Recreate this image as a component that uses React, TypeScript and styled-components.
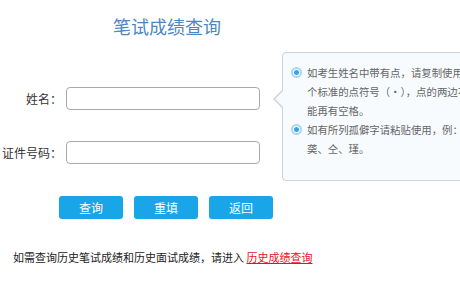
import React from 'react'
import styled, { createGlobalStyle } from 'styled-components'

const GlobalStyle = createGlobalStyle`
  html, body {
    margin: 0;
    padding: 0;
    background: #fff;
    overflow: hidden;
  }
  body {
    font-family: "Noto Sans CJK SC", "Noto Sans", sans-serif;
    color: #333;
  }
`

const Page = styled.div`
  width: 460px;
  height: 291px;
  overflow: hidden;
`

const Main = styled.div`
  display: flex;
  align-items: flex-start;
`

const FormCol = styled.div`
  width: 273px;
  flex-shrink: 0;
`

const Title = styled.h1`
  margin: 0;
  padding: 14px 0 0 113px;
  height: 36px;
  font-size: 18px;
  font-weight: normal;
  line-height: 24px;
  color: #4b87c2;
  white-space: nowrap;
`

const Rows = styled.div`
  display: flex;
  flex-direction: column;
  gap: 31px;
  padding-top: 37px;
`

const Row = styled.div`
  display: flex;
  align-items: center;
  gap: 4px;
`

const Label = styled.label`
  width: 62px;
  text-align: right;
  font-size: 12px;
  color: #333;
  white-space: nowrap;
`

const TextInput = styled.input`
  box-sizing: border-box;
  width: 194px;
  height: 23px;
  border: 1px solid #a9a9a9;
  border-radius: 4px;
  outline: none;
  padding: 0 6px;
  font-size: 12px;
`

const Buttons = styled.div`
  display: flex;
  gap: 11px;
  padding: 32px 0 0 59px;
`

const Button = styled.button`
  width: 64px;
  height: 23px;
  border: none;
  border-radius: 3px;
  background: #18a6e8;
  color: #fff;
  font-family: inherit;
  font-size: 12px;
  padding: 0;
  cursor: pointer;
`

const Tip = styled.div`
  position: relative;
  box-sizing: border-box;
  margin: 52px 0 0 9px;
  width: 220px;
  height: 129px;
  flex-shrink: 0;
  padding: 10px 0 0 8px;
  background: #f7fbfe;
  border: 1px solid #c9d4df;
  border-radius: 4px;

  &::before,
  &::after {
    content: '';
    position: absolute;
    top: 36px;
    width: 0;
    height: 0;
    border-style: solid;
  }
  &::before {
    left: -10px;
    border-width: 10px 10px 10px 0;
    border-color: transparent #c9d4df transparent transparent;
  }
  &::after {
    left: -8px;
    top: 37px;
    border-width: 9px 9px 9px 0;
    border-color: transparent #f7fbfe transparent transparent;
  }
`

const TipItem = styled.div`
  display: flex;
  align-items: flex-start;
  gap: 5px;
  font-size: 10.4px;
  line-height: 19px;
  color: #666;
`

const TipText = styled.div`
  width: 170px;
`

const Radio = styled.span`
  flex-shrink: 0;
  box-sizing: border-box;
  margin-top: 4px;
  width: 11px;
  height: 11px;
  border-radius: 50%;
  border: 2px solid #a9d6f3;
  background: #fff;
  display: flex;
  align-items: center;
  justify-content: center;

  &::after {
    content: '';
    width: 5px;
    height: 5px;
    border-radius: 50%;
    background: #3aa3e3;
  }
`

const Footer = styled.p`
  margin: 0;
  padding: 29px 0 0 13px;
  font-size: 11px;
  line-height: 18px;
  color: #222;
  white-space: nowrap;
`

const HistoryLink = styled.a`
  color: #e8111d;
  text-decoration: underline;
`

const tips = [
  '如考生姓名中带有点，请复制使用一个标准的点符号（·），点的两边不能再有空格。',
  '如有所列孤僻字请粘贴使用，例：䶮、仝、瑾。',
]

export default function App() {
  return (
    <Page>
      <GlobalStyle />
      <Main>
        <FormCol>
          <Title>笔试成绩查询</Title>
          <Rows>
            <Row>
              <Label>姓名：</Label>
              <TextInput type="text" name="name" />
            </Row>
            <Row>
              <Label>证件号码：</Label>
              <TextInput type="text" name="idNo" />
            </Row>
          </Rows>
          <Buttons>
            <Button type="button">查询</Button>
            <Button type="button">重填</Button>
            <Button type="button">返回</Button>
          </Buttons>
        </FormCol>
        <Tip>
          {tips.map((t) => (
            <TipItem key={t}>
              <Radio />
              <TipText>{t}</TipText>
            </TipItem>
          ))}
        </Tip>
      </Main>
      <Footer>
        如需查询历史笔试成绩和历史面试成绩，请进入 <HistoryLink href="#">历史成绩查询</HistoryLink>
      </Footer>
    </Page>
  )
}
